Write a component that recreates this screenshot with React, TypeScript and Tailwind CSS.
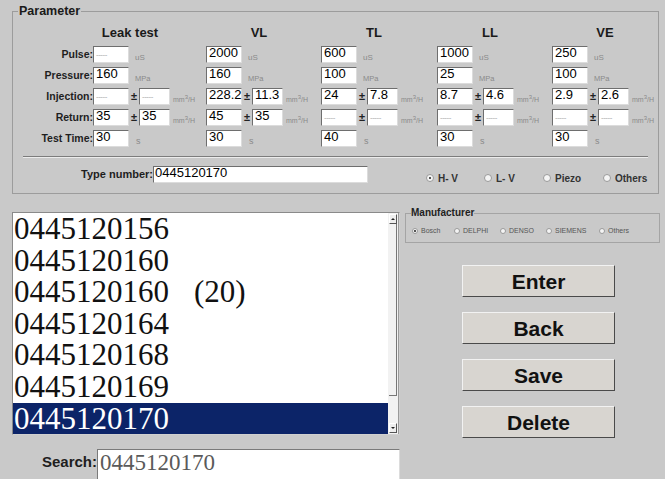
import React from "react"

type Col = {
  name: string
  pulse: string
  pressure: string
  inj: [string, string]
  ret: [string, string]
  time: string
}

const cols: Col[] = [
  { name: "Leak test", pulse: "", pressure: "160", inj: ["", ""], ret: ["35", "35"], time: "30" },
  { name: "VL", pulse: "2000", pressure: "160", inj: ["228.2", "11.3"], ret: ["45", "35"], time: "30" },
  { name: "TL", pulse: "600", pressure: "100", inj: ["24", "7.8"], ret: ["", ""], time: "40" },
  { name: "LL", pulse: "1000", pressure: "25", inj: ["8.7", "4.6"], ret: ["", ""], time: "30" },
  { name: "VE", pulse: "250", pressure: "100", inj: ["2.9", "2.6"], ret: ["", ""], time: "30" },
]

const items = ["0445120156", "0445120160", "0445120160", "0445120164", "0445120168", "0445120169", "0445120170"]

function Box({ value, wide }: { value: string; wide?: boolean }) {
  return (
    <div
      className={`${wide ? "w-[36px]" : "w-[31px]"} h-[17px] shrink-0 bg-white border border-[#dcdcdc] border-t-[#6e6e6e] border-l-[#6e6e6e] pl-[2px] text-[13px] leading-[11px] text-black`}
    >
      {value || <span className="text-[8px] text-[#a8a8a8] tracking-[-0.5px]">-----</span>}
    </div>
  )
}

function Unit({ children, size }: { children: React.ReactNode; size: string }) {
  return <span className={`${size} text-[#8a8a8a] whitespace-nowrap`}>{children}</span>
}

function Tol({ pair }: { pair: [string, string] }) {
  return (
    <div className="flex items-center">
      <Box value={pair[0]} wide />
      <span className="w-[10px] text-center text-[11px] font-bold text-[#222]">±</span>
      <Box value={pair[1]} />
      <span className="ml-[3px]">
        <Unit size="text-[7px]">
          mm<sup className="text-[6px]">3</sup>/H
        </Unit>
      </span>
    </div>
  )
}

function Radio({ label, checked, small }: { label: string; checked?: boolean; small?: boolean }) {
  return (
    <div className="flex items-center">
      <span
        className={`${small ? "w-[6px] h-[6px]" : "w-[8px] h-[8px]"} rounded-full bg-[#f4f4f4] border border-[#9a9a9a] flex items-center justify-center`}
      >
        {checked && <span className="w-[2px] h-[2px] rounded-full bg-[#222]" />}
      </span>
      <span className={small ? "ml-[3px] text-[7px] text-[#555]" : "ml-[4px] text-[10px] font-bold text-[#333]"}>
        {label}
      </span>
    </div>
  )
}

function Btn({ label }: { label: string }) {
  return (
    <button className="w-[153px] h-[32px] bg-[#d8d5d0] border border-t-[#f2f2f2] border-l-[#f2f2f2] border-b-[#4a4a4a] border-r-[#4a4a4a] text-[21px] font-bold text-[#111] leading-none">
      {label}
    </button>
  )
}

const rowLabel = "text-right text-[10.5px] font-bold text-[#1e1e1e] leading-[17px]"

export default function App() {
  return (
    <div className="w-[665px] h-[479px] overflow-hidden bg-[#c9c9c9] font-['Liberation_Sans',Arial,sans-serif]">
      {/* Parameter group */}
      <div className="pl-[12px] pr-[7px] pt-[4px]">
        <fieldset className="border border-[#9c9c9c] pb-[10px]">
          <legend className="ml-[5px] px-[1px] text-[12.5px] font-bold leading-[14px] text-[#1a1a1a]">Parameter</legend>

          {/* headers */}
          <div className="grid grid-cols-[80px_113px_115px_116px_115px_1fr] mt-[8px] h-[14px] text-[13px] font-bold leading-[14px] text-[#1a1a1a]">
            <div />
            <div className="w-[74px] text-center">Leak test</div>
            {cols.slice(1).map((c) => (
              <div key={c.name} className="w-[106px] text-center">
                {c.name}
              </div>
            ))}
          </div>

          {/* rows */}
          <div className="grid grid-cols-[80px_113px_115px_116px_115px_1fr] auto-rows-[17px] gap-y-[4px] mt-[6px]">
            <div className={rowLabel}>Pulse:</div>
            {cols.map((c) => (
              <div key={c.name} className="flex items-center">
                <Box value={c.pulse} wide />
                <span className="ml-[6px]">
                  <Unit size="text-[8px]">uS</Unit>
                </span>
              </div>
            ))}

            <div className={rowLabel}>Pressure:</div>
            {cols.map((c) => (
              <div key={c.name} className="flex items-center">
                <Box value={c.pressure} wide />
                <span className="ml-[6px]">
                  <Unit size="text-[7.5px]">MPa</Unit>
                </span>
              </div>
            ))}

            <div className={rowLabel}>Injection:</div>
            {cols.map((c) => (
              <Tol key={c.name} pair={c.inj} />
            ))}

            <div className={rowLabel}>Return:</div>
            {cols.map((c) => (
              <Tol key={c.name} pair={c.ret} />
            ))}

            <div className={rowLabel}>Test Time:</div>
            {cols.map((c) => (
              <div key={c.name} className="flex items-center">
                <Box value={c.time} wide />
                <span className="ml-[7px]">
                  <Unit size="text-[9px]">s</Unit>
                </span>
              </div>
            ))}
          </div>

          {/* separator */}
          <div className="mt-[9px] ml-[10px] mr-[10px] h-[2px] border-t border-b border-t-[#7c7c7c] border-b-[#ececec]" />

          {/* type number */}
          <div className="flex items-center mt-[8px] h-[17px]">
            <div className="w-[140px] text-right text-[11px] font-bold text-[#1e1e1e]">Type number:</div>
            <div className="w-[215px] h-[17px] bg-white border border-[#dcdcdc] border-t-[#6e6e6e] border-l-[#6e6e6e] pl-[1px] text-[13px] leading-[12px]">
              0445120170
            </div>
            <div className="flex items-center ml-[58px] mt-[7px]">
              <div className="w-[58px]">
                <Radio label="H- V" checked />
              </div>
              <div className="w-[59px]">
                <Radio label="L- V" />
              </div>
              <div className="w-[60px]">
                <Radio label="Piezo" />
              </div>
              <Radio label="Others" />
            </div>
          </div>
        </fieldset>
      </div>

      {/* lower section */}
      <div className="flex">
        <div className="ml-[12px] w-[388px]">
          <div className="mt-[18px] h-[223px] flex bg-white border border-[#8a8a8a] border-r-[#d0d0d0] border-b-[#d0d0d0]">
            <div className="flex-1 font-['Liberation_Serif','Times_New_Roman',serif] text-[31px] leading-[31.6px] text-[#111]">
              {items.map((it, i) => (
                <div
                  key={i}
                  className={`pl-[1px] whitespace-nowrap ${i === items.length - 1 ? "bg-[#0c2468] text-white" : ""}`}
                >
                  {it}
                  {i === 2 && <span className="ml-[25px]">(20)</span>}
                </div>
              ))}
            </div>
            {/* scrollbar */}
            <div className="w-[11px] flex flex-col bg-[#f2f2f2] border-r border-[#9a9a9a]">
              <div className="h-[10px] mx-[1px] mt-[1px] flex items-center justify-center bg-[#eeeeee] border border-t-white border-l-white border-b-[#555] border-r-[#555]">
                <span className="w-0 h-0 border-l-[2px] border-r-[2px] border-b-[2px] border-l-transparent border-r-transparent border-b-[#222]" />
              </div>
              <div className="h-[172px] mx-[1px] border-b border-r border-[#777]" />
              <div className="flex-1" />
              <div className="h-[10px] mx-[1px] mb-[1px] flex items-center justify-center bg-[#eeeeee] border border-t-white border-l-white border-b-[#555] border-r-[#555]">
                <span className="w-0 h-0 border-l-[2px] border-r-[2px] border-t-[2px] border-l-transparent border-r-transparent border-t-[#222]" />
              </div>
            </div>
          </div>

          <div className="flex items-start mt-[14px]">
            <div className="w-[85px] mt-[4px] text-right text-[15px] font-bold leading-[18px] text-[#1e1e1e]">Search:</div>
            <div className="w-[303px] h-[32px] bg-white border border-[#dcdcdc] border-t-[#7a7a7a] border-l-[#7a7a7a] pl-[2px] font-['Liberation_Serif','Times_New_Roman',serif] text-[23px] leading-[26px] text-[#5a5a5a]">
              0445120170
            </div>
          </div>
        </div>

        <div className="ml-[5px] w-[255px]">
          <fieldset className="mt-[13px] border border-[#a4a4a4] pb-[5px]">
            <legend className="ml-[5px] text-[10px] font-bold leading-[12px] text-[#222]">Manufacturer</legend>
            <div className="flex items-center mt-[6px] h-[12px] pl-[6px]">
              <div className="w-[42px]">
                <Radio label="Bosch" checked small />
              </div>
              <div className="w-[46px]">
                <Radio label="DELPHI" small />
              </div>
              <div className="w-[46px]">
                <Radio label="DENSO" small />
              </div>
              <div className="w-[53px]">
                <Radio label="SIEMENS" small />
              </div>
              <Radio label="Others" small />
            </div>
          </fieldset>

          <div className="ml-[57px] mt-[22px] flex flex-col gap-[15px]">
            <Btn label="Enter" />
            <Btn label="Back" />
            <Btn label="Save" />
            <Btn label="Delete" />
          </div>
        </div>
      </div>
    </div>
  )
}
